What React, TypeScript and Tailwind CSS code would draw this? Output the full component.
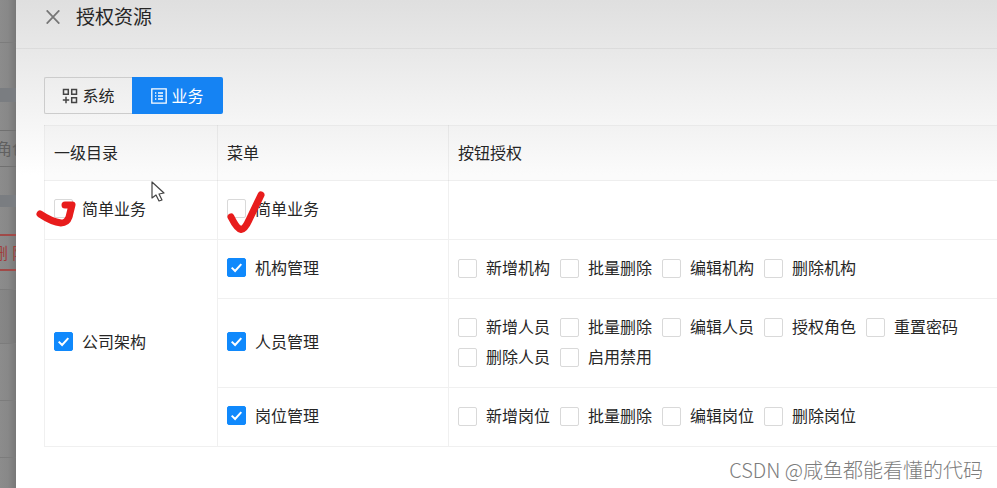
import { ReactNode } from "react";

type Item = { label: string; checked?: boolean };
type Menu = Item & { buttons: string[] };
type Directory = Item & { menus: Menu[] };

const directories: Directory[] = [
  { label: "简单业务", menus: [{ label: "简单业务", buttons: [] }] },
  {
    label: "公司架构",
    checked: true,
    menus: [
      { label: "机构管理", checked: true, buttons: ["新增机构", "批量删除", "编辑机构", "删除机构"] },
      {
        label: "人员管理",
        checked: true,
        buttons: ["新增人员", "批量删除", "编辑人员", "授权角色", "重置密码", "删除人员", "启用禁用"],
      },
      { label: "岗位管理", checked: true, buttons: ["新增岗位", "批量删除", "编辑岗位", "删除岗位"] },
    ],
  },
];

const Check = ({ label, checked }: Item) => (
  <label className="flex items-center gap-[9px] whitespace-nowrap">
    <span className="relative size-[19px] shrink-0">
      <input
        type="checkbox"
        defaultChecked={checked}
        className="peer block size-[19px] appearance-none rounded-xs border border-[#d9d9d9] bg-white checked:border-[#1089fc] checked:bg-[#1089fc]"
      />
      <svg
        viewBox="0 0 19 19"
        className="pointer-events-none absolute inset-0 hidden size-[19px] peer-checked:block"
        fill="none"
        stroke="#fff"
        strokeWidth="2"
      >
        <path d="M4.7 9.6 8.1 13 14.3 6.2" />
      </svg>
    </span>
    {label}
  </label>
);

const SystemIcon = () => (
  <svg viewBox="0 0 16 16" className="size-4 text-[#444]" fill="none" stroke="currentColor" strokeWidth="1.5">
    <path d="M1.5 1.5h4.8v4.8H1.5zM9.7 1.5h4.8v4.8H9.7zM9.7 9.7h4.8v4.8H9.7zM4 8.8v6.4M.8 12h6.4" />
  </svg>
);

const BusinessIcon = () => (
  <svg viewBox="0 0 16 16" className="size-4" fill="none" stroke="currentColor" strokeWidth="1.3">
    <path d="M.8.8h14.4v14.4H.8zM7 5h5M7 8h5M7 11h5M4 5h1.3M4 8h1.3M4 11h1.3" />
  </svg>
);

const Th = ({ children }: { children: ReactNode }) => (
  <th className="h-[55px] border border-black/5 bg-[#00000004] px-[9px] text-left font-normal">{children}</th>
);

const App = () => {
  return (
    <div className="relative flex h-screen overflow-hidden bg-white font-['Noto_Sans','Noto_Sans_CJK_SC',sans-serif] text-base text-[#262626]">
      {/* Masked page behind the drawer */}
      <div className="flex w-4 shrink-0 flex-col overflow-hidden bg-linear-to-r from-[#8c8c8c] via-[#888] to-[#787878] whitespace-nowrap text-[#606060]">
        <div className="h-[43px] shrink-0 border-b border-[#7c7c7c]" />
        <div className="h-[45px] shrink-0" />
        <div className="h-[14px] shrink-0 bg-[#7a7d81]" />
        <div className="h-7 shrink-0" />
        <div className="flex h-[37px] shrink-0 items-center border-y border-[#707070]">
          <span className="-ml-1">角色</span>
        </div>
        <div className="h-7 shrink-0" />
        <div className="h-3 shrink-0 bg-[#7a7d81]" />
        <div className="h-[27px] shrink-0" />
        <div className="flex h-[37px] shrink-0 items-center border-y-2 border-[#a04a48] text-[#a03c3a]">
          <span className="-ml-2">删 除</span>
        </div>
        <div className="h-[19px] shrink-0 border-b border-[#7c7c7c]" />
        <div className="h-[54px] shrink-0 border-b border-[#7c7c7c] bg-black/3" />
        <div className="h-[57px] shrink-0 border-b border-[#7c7c7c]" />
        <div className="h-[57px] shrink-0 border-b border-[#7c7c7c]" />
      </div>

      <main className="min-w-0 flex-1 overflow-hidden bg-linear-to-b from-[#dfdfdf] to-white to-[175px]">
        <header className="flex h-[49px] items-start border-b border-black/5 pt-1 pl-[30px]">
          <button aria-label="关闭" className="mt-[6px] mr-4 text-[#777]">
            <svg viewBox="0 0 14 14" className="size-[14px]" fill="none" stroke="currentColor" strokeWidth="1.7">
              <path d="M.7.3 13.3 13.7M13.3.3.7 13.7" />
            </svg>
          </button>
          <h1 className="text-[19px] leading-[26px]">授权资源</h1>
        </header>

        <div className="mt-7 ml-7 flex h-[37px] leading-5">
          <button className="flex w-[88px] items-center justify-center gap-1 rounded-l-xs border border-r-0 border-[#ccc]">
            <SystemIcon />
            系统
          </button>
          <button className="flex w-[91px] items-center justify-center gap-1 rounded-r-xs bg-[#1583f3] text-white">
            <BusinessIcon />
            业务
          </button>
        </div>

        <table className="mt-[11px] ml-7 w-full table-fixed border-collapse">
          <colgroup>
            <col className="w-[173px]" />
            <col className="w-[231px]" />
            <col />
          </colgroup>
          <thead>
            <tr>
              <Th>一级目录</Th>
              <Th>菜单</Th>
              <Th>按钮授权</Th>
            </tr>
          </thead>
          <tbody className="bg-white">
            {directories.map((dir) =>
              dir.menus.map((menu, i) => (
                <tr key={menu.label}>
                  {i === 0 && (
                    <td rowSpan={dir.menus.length} className="border border-[#f0f0f0] px-[9px] pb-[3px]">
                      <Check label={dir.label} checked={dir.checked} />
                    </td>
                  )}
                  <td className="border border-[#f0f0f0] px-[9px] pb-[3px]">
                    <Check label={menu.label} checked={menu.checked} />
                  </td>
                  <td className="border border-[#f0f0f0] px-[9px] pt-[13px] pb-[15px]">
                    <div className="flex min-h-[30px] max-w-[510px] flex-wrap gap-x-[10px] leading-[30px]">
                      {menu.buttons.map((name) => (
                        <Check key={name} label={name} />
                      ))}
                    </div>
                  </td>
                </tr>
              ))
            )}
          </tbody>
        </table>
      </main>

      {/* Hand-drawn ticks and the pointer */}
      <svg
        viewBox="0 0 240 60"
        className="pointer-events-none absolute top-[180px] left-[30px] h-[60px] w-[240px]"
        fill="none"
        stroke="#e81c1c"
        strokeWidth="7"
        strokeLinecap="round"
        strokeLinejoin="round"
      >
        <path d="M10 34Q22 42 31 43Q37 43 39 37L42 25H35" />
        <path d="M201 37Q207 49 211 49.5Q215 49 219 40L231 15" />
        <path
          d="M122 2v16l4-3 3 6 3-1-3-6 5-1z"
          fill="#fff"
          stroke="#444"
          strokeWidth="1.2"
        />
      </svg>

      <footer className="absolute right-[14px] bottom-1 font-['Noto_Sans_CJK_SC',sans-serif] text-xl leading-7 font-light text-[#7c7c7c]">
        CSDN @咸鱼都能看懂的代码
      </footer>
    </div>
  );
};

export default App;
